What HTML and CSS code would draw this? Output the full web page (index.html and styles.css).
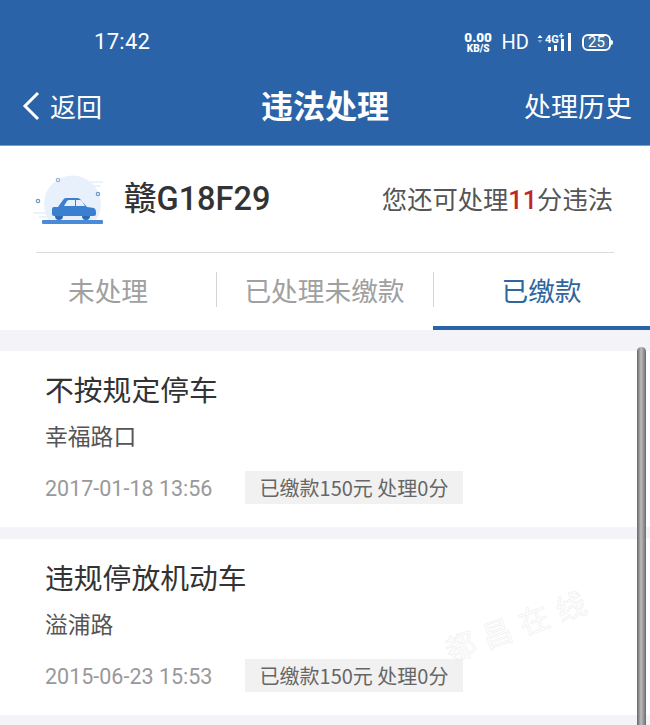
FILE: index.html
```
<!DOCTYPE html>
<html lang="zh">
<head>
<meta charset="utf-8">
<title>违法处理</title>
<link rel="stylesheet" href="styles.css">
</head>
<body>
<div class="app">
  <header class="header">
    <div class="status">
      <span class="time">17:42</span>
      <div class="status-right">
        <span class="speed"><b>0.00</b><b class="unit">KB/S</b></span>
        <span class="hd">HD</span>
        <svg class="signal" width="36" height="22" viewBox="0 0 36 22">
          <path d="M1.500 7 4 4 6.500 7Z" fill="#fff"/>
          <path d="M1.500 9 4 12 6.500 9Z" fill="#7fa5d2"/>
          <text x="9" y="12" class="net">4G<tspan class="plus" dy="-4">+</tspan></text>
          <rect x="12" y="16" width="3" height="4" fill="#fff"/>
          <rect x="18" y="14" width="3" height="6" fill="#fff"/>
          <rect x="25" y="8" width="3" height="12" fill="#fff"/>
          <rect x="32" y="2" width="3" height="18" fill="#fff"/>
        </svg>
        <span class="battery"><span class="battery-level">25</span></span>
      </div>
    </div>
    <nav class="nav">
      <div class="back">
        <svg width="20" height="30" viewBox="0 0 20 30"><path d="M17 2 4 15 17 28" fill="none" stroke="#fff" stroke-width="3"/></svg>
        <span>返回</span>
      </div>
      <h1 class="title">违法处理</h1>
      <span class="history">处理历史</span>
    </nav>
  </header>

  <section class="info">
    <div class="car">
      <svg width="72" height="52" viewBox="0 0 72 52">
        <defs><clipPath id="c"><rect width="72" height="47"/></clipPath></defs>
        <circle cx="39.500" cy="31" r="28.500" fill="#e8f1fb" clip-path="url(#c)"/>
        <path d="M57 9h13M60 13h8M0 40h17M6 44h10" stroke="#e6eef8" stroke-width="1.500"/>
        <circle cx="25" cy="7" r="1.700" fill="none" stroke="#9db5d2" stroke-width="1.200"/>
        <circle cx="65" cy="21" r="1.700" fill="none" stroke="#6f9bcc" stroke-width="1.200"/>
        <circle cx="5" cy="28" r="1.700" fill="none" stroke="#6f9bcc" stroke-width="1.200"/>
        <rect x="9" y="47" width="61" height="4" rx="1" fill="#4a8ad6"/>
        <circle cx="26" cy="43" r="4" fill="#2c6ab5"/>
        <circle cx="53" cy="43" r="4" fill="#2c6ab5"/>
        <path d="M21 43q-2 0-2-2v-5q0-2 2-2h4l5-7q1-2 3-2h11q2 0 3 1l7 8 7 1q2 1 2 4v2q0 2-2 2Z" fill="#3b7fd0"/>
        <path d="M31 33l3-5q1-1 2-1h6v6Zm12 0v-6h4q1 0 2 1l3 5Z" fill="#e8f1fb"/>
      </svg>
      <strong class="plate">赣G18F29</strong>
    </div>
    <p class="points">您还可处理<em>11</em>分违法</p>
  </section>

  <div class="tabs">
    <div class="tab">未处理</div>
    <div class="tab tab-sep">已处理未缴款</div>
    <div class="tab tab-sep active">已缴款</div>
  </div>

  <main class="list">
    <article class="card">
      <h2>不按规定停车</h2>
      <p class="place">幸福路口</p>
      <div class="meta"><time>2017-01-18 13:56</time><span class="badge">已缴款150元 处理0分</span></div>
    </article>
    <article class="card">
      <h2>违规停放机动车</h2>
      <p class="place">溢浦路</p>
      <div class="meta"><time>2015-06-23 15:53</time><span class="badge">已缴款150元 处理0分</span></div>
    </article>
  </main>
  <div class="scrollbar"></div>
  <div class="watermark">都昌在线</div>
</div>
</body>
</html>
```

FILE: styles.css
```
* { box-sizing: border-box; margin: 0; padding: 0; }
html, body { width: 650px; height: 725px; overflow: hidden; }
body { font-family: "Noto Sans CJK SC", "Noto Sans", Roboto, sans-serif; background: #f4f4f8; color: #333; }
.app { position: relative; width: 650px; height: 725px; overflow: hidden; }

.header { height: 146px; background: #2a63a8; border-bottom: 1px solid #7a9fcb; color: #fff; display: flex; flex-direction: column; }
.status { height: 76px; display: flex; align-items: center; justify-content: space-between; padding: 8px 39px 0 94px; }
.time { font: 22px/1 Roboto, sans-serif; letter-spacing: .3px; }
.status-right { display: flex; align-items: center; }
.speed { display: flex; flex-direction: column; align-items: center; gap: 1px; font: 700 13.500px/11px Roboto, sans-serif; width: 29px; }
.speed .unit { font-size: 10px; line-height: 9px; }
.hd { font: 20px/1 Roboto, sans-serif; margin-left: 9px; }
.signal { margin-left: 7px; }
.net { font: 700 11px Roboto, sans-serif; fill: #fff; }
.plus { font-size: 9px; }
.battery { margin-left: 10px; width: 29px; height: 17px; border: 2px solid #fff; border-radius: 6px; padding: 1px; position: relative; display: flex; }
.battery::after { content: ""; position: absolute; right: -4px; top: 4px; width: 2px; height: 5px; background: #fff; border-radius: 0 2px 2px 0; }
.battery-level { flex: 1; background: #3f6f9f; border-radius: 3px; font: 15px/11px Roboto, sans-serif; text-align: center; }

.nav { flex: 1; display: flex; align-items: center; justify-content: space-between; padding: 0 18px 10px 21px; position: relative; }
.back { display: flex; align-items: center; gap: 9px; font-size: 26px; }
.title { font-size: 32px; font-weight: 700; position: absolute; left: 0; right: 0; text-align: center; line-height: 1; top: 12px; pointer-events: none; }
.history { font-size: 27px; }

.info { height: 107px; padding: 0 37px 0 33px; background: #fff linear-gradient(#dcdcdc, #dcdcdc) no-repeat 36px 106px / 578px 1px; display: flex; align-items: center; justify-content: space-between; }
.car { display: flex; align-items: center; gap: 19px; }
.car svg { display: block; margin-top: -2px; }
.plate { font-size: 32.500px; font-weight: 500; color: #333; font-family: Roboto, "Noto Sans CJK SC", sans-serif; line-height: 1; }
.points { font-size: 25.300px; color: #555; margin-top: -3px; }
.points em { font-style: normal; color: #c0272d; font-family: Roboto, sans-serif; font-weight: 500; }

.tabs { height: 77px; background: #fff; display: grid; grid-template-columns: 216px 217px 217px; }
.tab { display: flex; align-items: center; justify-content: center; font-size: 26.700px; color: #a0a0a0; position: relative; padding-bottom: 5px; }
.tab-sep::before { content: ""; position: absolute; left: 0; top: 19px; height: 35px; width: 1px; background: #d4d4d4; }
.active { color: #2f669f; border-bottom: 4px solid #2a63a8; padding-bottom: 1px; }

.list { padding-top: 21px; display: flex; flex-direction: column; gap: 12px; }
.card { height: 176px; background: #fff; padding: 19px 45px 0; }
.card h2 { font-size: 28.800px; font-weight: 400; line-height: 38px; color: #333; }
.place { font-size: 22.800px; line-height: 32px; margin-top: 12px; color: #555; }
.meta { display: flex; align-items: center; margin-top: 17px; }
.meta time { font: 21.500px/33px Roboto, sans-serif; color: #999; width: 200px; padding-top: 3px; }
.badge { height: 33px; width: 218px; background: #f1f1f1; display: flex; align-items: center; justify-content: center; font-size: 20px; color: #666; white-space: nowrap; }

.scrollbar { position: absolute; left: 637px; top: 347px; width: 9px; height: 390px; border-radius: 5px 5px 0 0; background: linear-gradient(90deg, #666, #bdbdbd 45%, #6c6c6c); }
.watermark { position: absolute; left: 446px; top: 635px; font: 30px/1 "Noto Sans CJK SC", sans-serif; letter-spacing: 9px; color: transparent; -webkit-text-stroke: .6px #eeeeee; transform: rotate(-20deg); transform-origin: left center; white-space: nowrap; }
```
